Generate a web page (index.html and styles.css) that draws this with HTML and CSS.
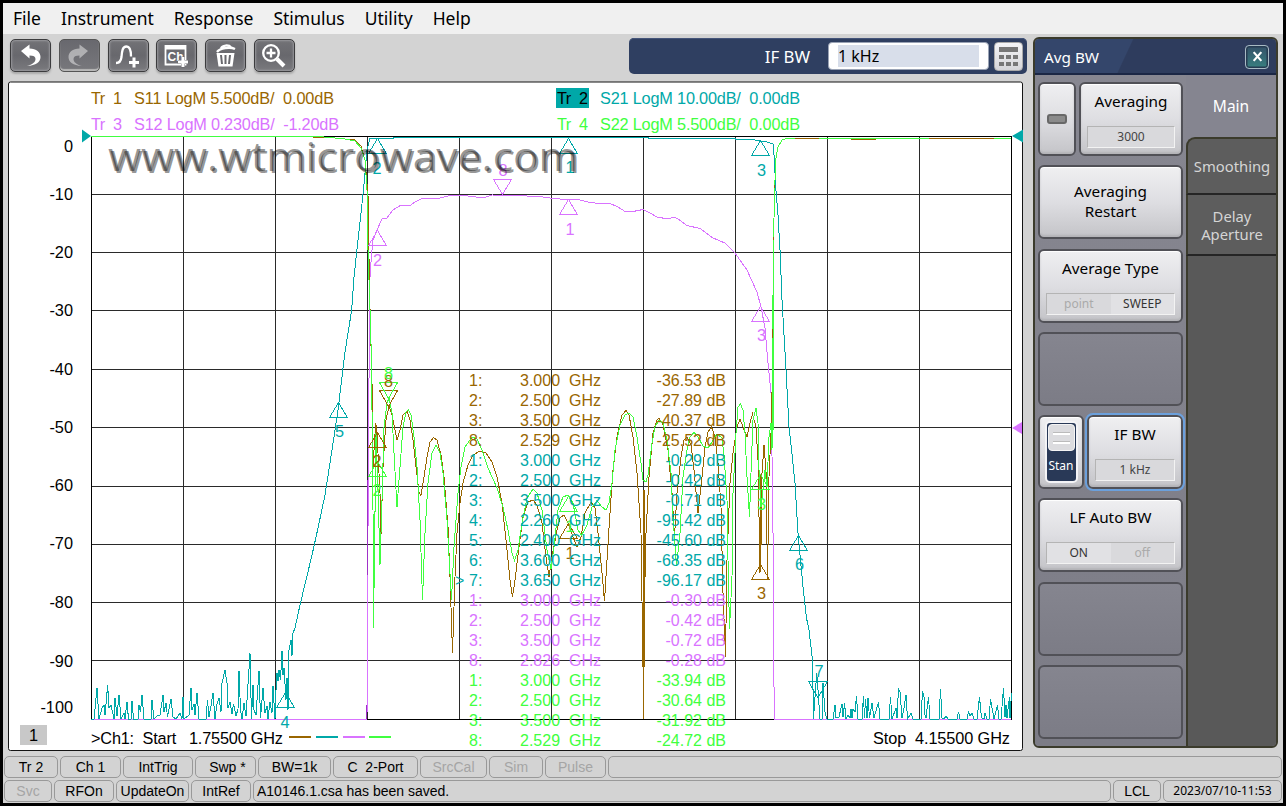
FILE: index.html
```html
<!DOCTYPE html>
<html lang="en">
<head>
<meta charset="utf-8">
<title>Network Analyzer</title>
<link rel="stylesheet" href="styles.css">
</head>
<body>
<div class="app">
  <nav class="menu"><span>File</span><span>Instrument</span><span>Response</span><span>Stimulus</span><span>Utility</span><span>Help</span></nav>
  <div class="main">
    <div class="work">
      <div class="toolbar">
        <div class="tools">
          <button class="tool"><svg viewBox="0 0 41 33"><path class="ic" d="M11 12L19.500 5.500v4c7 .5 11 3.500 11 8.500 0 5-4.500 8.500-13.500 9 5.500-1.500 8.500-4 8.500-7 0-2.500-2-3.500-6-3.500v3z"/></svg></button>
          <button class="tool off"><svg viewBox="0 0 41 33"><path class="ic" d="M30 12L21.500 5.500v4c-7 .5-11 3.500-11 8.500 0 5 4.500 8.500 13.500 9-5.500-1.500-8.500-4-8.500-7 0-2.500 2-3.500 6-3.500v3z"/></svg></button>
          <button class="tool"><svg viewBox="0 0 41 33"><path class="ln" d="M9 24c3.500 0 5-2 5.500-6 .5-6 1-10.500 5-10.500s4.500 4.500 4.500 10"/><path class="ic" d="M25.500 18.500h3v3.500h3.500v3h-3.500v3.500h-3v-3.500H22v-3h3.500z"/></svg></button>
          <button class="tool"><svg viewBox="0 0 41 33"><path class="ln thin" d="M9.500 7h20v18.500h-20z"/><path class="ic" d="M9 6h21v4.500H9z"/><text x="11.500" y="21.500" class="chtext">Ch</text><path class="ic edge" d="M25.500 18h3v3.500H32v3h-3.500V28h-3v-3.500H22v-3h3.500z"/></svg></button>
          <button class="tool"><svg viewBox="0 0 41 33"><path class="ln" d="M12 13c3-4 13-5.500 18-3M16 9.500c1-3.500 8-4 10-1"/><path class="ic" d="M11.500 14h18l-2 13.500h-14z"/><path class="gap" d="M16 16l1 9M20.500 16v9M25 16l-1 9"/></svg></button>
          <button class="tool"><svg viewBox="0 0 41 33"><circle class="ln" cx="18" cy="14" r="7.800"/><path class="ln" d="M18 9.500v9M13.500 14h9"/><path class="ln fat" d="M24 20l7 7"/></svg></button>
        </div>
        <div class="entry"><span>IF BW</span><div class="field"><b>1 kHz</b></div><button class="calc"><svg viewBox="0 0 29 29"><path fill="#777" d="M5 5h19v5H5zM5 13h5v4H5zM12 13h5v4h-5zM19 13h5v4h-5zM5 20h5v4H5zM12 20h5v4h-5zM19 20h5v4h-5z"/></svg></button></div>
      </div>
      <div class="chart">
        <svg class="plot" viewBox="8 81 1016 670">
          <rect x="8.500" y="82" width="1014" height="668.500" fill="#fff" stroke="#141414" rx="2"/>
          <g class="head">
            <text class="c1" x="91" y="104" textLength="31">Tr&#160; 1</text><text class="c1" x="134" y="104" textLength="200">S11 LogM 5.500dB/&#160; 0.00dB</text>
            <text class="c3" x="91" y="130" textLength="31">Tr&#160; 3</text><text class="c3" x="134" y="130" textLength="205">S12 LogM 0.230dB/&#160; -1.20dB</text>
            <rect class="f2" x="556" y="88" width="33" height="20"/>
            <text x="557" y="104" textLength="31">Tr&#160; 2</text><text class="c2" x="600" y="104" textLength="200">S21 LogM 10.00dB/&#160; 0.00dB</text>
            <text class="c4" x="557" y="130" textLength="31">Tr&#160; 4</text><text class="c4" x="600" y="130" textLength="200">S22 LogM 5.500dB/&#160; 0.00dB</text>
          </g>
          <path class="grid" d="M183.500 136v583M275.500 136v583M367.500 136v583M459.500 136v583M551.500 136v583M643.500 136v583M735.500 136v583M827.500 136v583M919.500 136v583M91 194.500h920M91 252.500h920M91 310.500h920M91 369.500h920M91 427.500h920M91 486.500h920M91 544.500h920M91 602.500h920M91 660.500h920"/>
          <path class="frame" d="M91.500 136.500h920v583h-920z"/>
          <g class="axis"><text x="73" y="152">0</text><text x="73" y="200">-10</text><text x="73" y="258">-20</text><text x="73" y="316">-30</text><text x="73" y="375">-40</text><text x="73" y="433">-50</text><text x="73" y="491">-60</text><text x="73" y="549">-70</text><text x="73" y="608">-80</text><text x="73" y="667">-90</text><text x="73" y="713">-100</text></g>
          <g class="trace">
            <polyline class="s3" points="91,719.500 367,719.500 367.500,575 368.500,480 368.500,397 369.500,360 370,277 371.500,255 373,240 377,230 382,219 387,218 393,210 400,205.700 410,205.500 415,202 422,198.700 438,198.500 452,195 468,196 480,197.500 486,197 492,195 513,195.500 540,196.500 555,198.700 568,199.500 580,200 590,202.500 600,203.500 610,203.500 618,207 625,211.500 633,211.500 643,209.500 650,213 658,217.500 667,218.500 675,217.500 678,219 687,225.500 700,228.500 713,238 725,243 735,253 747,270 757,292 761,307 765,328 767.700,360 771,393 772.500,487 773,533 773.500,653 774.500,719.500 1011,719.500"/>
            <path class="s3 dark" d="M367.500 480v95M366.500 705v14"/>
            <polyline class="s2" points="91,719.500 94,719 97,688 99,719 102,708 104,705 105,715 107.700,685 109,708 111,705 114,719 115,698 117,716 119,695 121,719 124,713 125,719 127,702 128.500,719 131,719 132,701 133.500,719 138,719 139,705 140.500,712 142,695 144,719 151,719 152,700 154,719 158,715 160,715 163,695 164,712 166,703 167.500,717 171,699 173,717 176,719 180,713 182,719 183,697 184,719 189,715 191,688 192,710 194,704 195,715 197,693 199,719 206,719 207.500,700 209,717 211,706 213,693 215,719 217,704 219,698 221,712 222,683 225,670 227,683 228,708 230,702 232,714 233.500,704 236,716 238,709 239,671 240.500,710 242,719 244,703 246,716 250,653 251.500,719 253,685 254,710 256,715 259,671 260.500,718 263,688 265,713 267,706 268,719 270,702 272,713 273,686 275,719 276,690 277,673 278,681 279,670 280.500,680 282,651 283,675 284,668 286,700 287,678 288,710 289,650 291,640 292,656 293,633 295,628 300,605 306,580 312,555 318,528 325,495 332,450 338,410 345,352 351.700,310 354,277 358,240 363.500,190 367,150 370,138.500 393,138.500 393,137.500 648,137.500 648,138.500 735,138.500 735,139.500 755,140 760,141 767,142 773,144 774.500,160 775.500,185 778,215 780,250 782,300 785.500,360 789,427 792,454 795,483 798,533 803,587 806.500,618 809,630 812.500,660 813.500,719 816.700,673 818,690 820,719 822,719 823,683 825,712 827,719 833,719 835,705 836,718 839,717 842,704 843,717 844.500,703 846,719 848,715 850,718 851,709 852,718 853,709 855,712 856.500,696 858,719 862,719 863.500,696 864.500,718 865.500,699 867,718 868,698 869.500,718 872,703 874,718 878.500,702 880,719 889,719 890.500,697 892,719 896,708 897,718 898.500,689 900,692 902,718 904,708 906,695 907.500,719 911,713 913,719 921,719 922.500,691 924,697 925,715 926,718 928.500,697 930,719 939,719 940.500,689 942,718 944,719 946,716 948,719 957,719 958.500,712 960,719 967,719 968.500,712 970,716 972,713 974,719 977,719 979.500,697 981,713 982,718 984,719 985,713 987,719 989,719 990.500,699 994,719 997.500,705 999,719 1001,719 1003.500,688 1005,717 1006,705 1007,718 1009.500,697 1010,718 1011.500,693"/>
            <polyline class="s1" points="313,137 335,138 355,140 361,146 365,160 368,195 369.500,290 372,382 373,467 375.700,423 377,433 380,493 381,535 383,467 386,420 389,406 392,415 395,430 397,440 400,430 403,415 407,411.500 410,420 413,440 416,467 419,492 421,495.500 424,477 427,457 430,442 433.500,437.500 437,440 441,455 444,477 448,527 450,577 452.500,653 455,577 457,533 460,503 463,483 468,465 473,455 480,451 486,453 492,462 497,477 502,503 506,540 510,580 512.500,597 515,580 519,547 523,517 528,502 533,500 537,505 542,523 546,557 549,577 552,557 557,530 560,518 564,515 568,523 573,537 577,547 581,537 585,513 591,502 595,508 598,533 602,573 604.500,601 607,560 610,513 613,470 617,437 622,415 626,410.500 629,415 633,437 637,473 641,533 643,667 646,533 649,477 653,433 657,420 659,418 663,425 668,450 672,493 674.500,537 677,493 681,457 684,440 687,437 691,445 694,470 698,513 702,477 705,447 708,432 711.500,427 715,437 718,463 721,507 723,593 725.500,657 727,560 730,483 733,453 737,427 740,419 743,427 747,437 750,423 752.500,414 756,427 758,460 760,573 762,473 764,445 766,470 767.500,580 769,477 771,433 772,393 772.500,333"/>
            <path class="s1" d="M643.500 660v59"/><path class="s1 heavy" d="M643.500 490v177M760.500 475v70"/>
            <polyline class="s4" points="91,136.500 318,136.500 335,138 345,139 355,141 361,148 365,160 367,190 368,250 370,310 371.500,360 372,410 373,510 373.500,627 374.500,553 376,433 378,490 380,565 382,500 384,427 387,403 389,398 392,413 394,453 397,507 400,467 403,427 406,412 408.500,410 411,415 414,437 417,467 420,520 422.500,600 425,533 428,483 432,453 436,445 440,453 443,473 447,520 451.500,600 454,547 458,493 461,467 465,447 472,437 477,439 482,450 488,468 497,488 503,507 508,530 512,553 514.500,560.500 518,550 522,523 527,498 533,489 537,493 542,510 547,550 551,569 554,547 558,510 563,497 568,495 573,503 578,530 581.500,535.500 587,525 592,507 597,500.500 602,507 606,510 609,503 612,483 615,450 620,425 625,415 629,413 633,417 637,437 641,463 643,480 646,482 648,475 652,443 655,427 659,420 663,423 667,440 671,473 673,517 676.500,566 680,533 683,477 687,450 690,437 694,432.500 698,437 703,446 708,448 712,442 717,434 722,438 724,455 727,500 728,560 729.500,629 732,577 733,493 736,433 738,407 740.500,404 743,410 745,433 747,477 749.500,517 751,473 753,420 756,408 758,423 759,470 761,507 763,490 765,470 767,487 769,437 771,423 772,450 772.500,353 773.500,240 774.700,187 776,158 778,147 782,140 787,138.500 1011,138.500"/>
            <path class="s4" d="M373.500 535v93M773.500 240v190"/>
            <path class="s1" d="M794.500 138.500h24M850.500 139.500h25M929 138.500h65M772.500 329v9M773.500 237v3M774.500 185v3"/>
          </g>
          <g class="trace">
            <path class="s2" d="M377.500 138.500l9 15h-18zM568.500 138.500l9 15h-18zM760.500 140.500l9 15h-18zM338.500 402.500l9 15h-18zM798.500 535.500l9 15h-18zM285.500 692.500l9 15h-18zM808.500 681.500h19l-9.500 16z"/>
            <path class="s3" d="M493.500 179.500h18l-9 15zM568.500 199.500l9 15h-18zM377.500 230.500l9 15h-18zM760.500 306.500l9 15h-18z"/>
            <path class="s1" d="M379.500 390.500h18l-9 16zM377.500 432.500l9 15h-18zM568.500 523.500l9 15h-18zM760.500 564.500l9 15h-18z"/>
            <path class="s4" d="M379.500 382.500h18l-9 16zM377.500 461.500l9 15h-18zM568.500 496.500l9 15h-18zM760.500 474.500l9 15h-18z"/>
          </g>
          <path class="f2" d="M82 129.500v13l9-6.500zM1023 129.500v13l-11-6.500z"/><path fill="#d973ff" d="M1022 422v12l-10-6z"/>
          <g class="mk">
            <g class="c2"><text x="377" y="174">2</text><text x="570" y="173">1</text><text x="761.500" y="176">3</text><text x="339.500" y="437">5</text><text x="799.500" y="570">6</text><text x="285" y="728">4</text><text x="819" y="677">7</text></g>
            <g class="c3"><text x="503" y="176">8</text><text x="570" y="235">1</text><text x="377.500" y="266">2</text><text x="761.500" y="341">3</text></g>
            <g class="c1"><text x="388.500" y="387">8</text><text x="377" y="467">2</text><text x="570" y="559">1</text><text x="761.500" y="599">3</text></g>
            <g class="c4"><text x="388.500" y="379">8</text><text x="377" y="496">2</text><text x="570" y="532">1</text><text x="761.500" y="510">3</text></g>
          </g>
          <g class="wm"><text x="108" y="171" textLength="470" lengthAdjust="spacingAndGlyphs">www.wtmicrowave.com</text><text x="110" y="173" textLength="470" lengthAdjust="spacingAndGlyphs">www.wtmicrowave.com</text></g>
          <rect x="20" y="725" width="27" height="20" fill="#c8c8c8"/>
          <g class="foot"><text x="29" y="741">1</text><text x="91" y="744" textLength="192">&gt;Ch1:&#160; Start&#160;&#160; 1.75500 GHz</text><text x="873" y="744" textLength="137">Stop&#160; 4.15500 GHz</text></g>
          <g class="legend"><path class="s1" d="M289 737h22"/><path class="s2" d="M316 737h22"/><path class="s3" d="M343 737h22"/><path class="s4" d="M369 737h22"/></g>
        </svg>
        <div class="readout">
          <div class="cur">&gt;</div>
          <div><p class="c1">1:
2:
3:
8:</p><p class="c2">1:
2:
3:
4:
5:
6:
7:</p><p class="c3">1:
2:
3:
8:</p><p class="c4">1:
2:
3:
8:</p></div>
          <div><p class="c1">3.000
2.500
3.500
2.529</p><p class="c2">3.000
2.500
3.500
2.260
2.400
3.600
3.650</p><p class="c3">3.000
2.500
3.500
2.826</p><p class="c4">3.000
2.500
3.500
2.529</p></div>
          <div><p class="c1">GHz
GHz
GHz
GHz</p><p class="c2">GHz
GHz
GHz
GHz
GHz
GHz
GHz</p><p class="c3">GHz
GHz
GHz
GHz</p><p class="c4">GHz
GHz
GHz
GHz</p></div>
          <div class="val"><p class="c1">-36.53 dB
-27.89 dB
-40.37 dB
-25.52 dB</p><p class="c2">-0.29 dB
-0.42 dB
-0.71 dB
-95.42 dB
-45.60 dB
-68.35 dB
-96.17 dB</p><p class="c3">-0.30 dB
-0.42 dB
-0.72 dB
-0.28 dB</p><p class="c4">-33.94 dB
-30.64 dB
-31.92 dB
-24.72 dB</p></div>
        </div>
      </div>
    </div>
    <aside class="panel">
      <header><span>Avg BW</span><button class="close"><svg viewBox="0 0 10 10"><path d="M1.500 1l7 8M8.500 1l-7 8"/></svg></button></header>
      <div class="pbody">
        <div class="keys">
          <div class="row"><div class="key led"><i></i></div><div class="key"><span>Averaging</span><div class="sub">3000</div></div></div>
          <div class="key two"><span>Averaging<br>Restart</span></div>
          <div class="key"><span>Average Type</span><div class="sub pair"><em>point</em><b>SWEEP</b></div></div>
          <div class="key blank"></div>
          <div class="row"><div class="key sw"><div class="slot"><div class="knob"><i></i><i></i></div>Stan</div></div><div class="key sel"><span>IF BW</span><div class="sub">1 kHz</div></div></div>
          <div class="key"><span>LF Auto BW</span><div class="sub pair"><b>ON</b><em>off</em></div></div>
          <div class="key blank"></div>
          <div class="key blank"></div>
        </div>
        <div class="tabs"><div class="tab main-tab">Main</div><div class="tab first">Smoothing</div><div class="tab">Delay<br>Aperture</div><div class="rest"></div></div>
      </div>
    </aside>
  </div>
  <div class="status s-top"><span>Tr 2</span><span>Ch 1</span><span>IntTrig</span><span>&nbsp;Swp *</span><span>BW=1k</span><span>C&nbsp; 2-Port</span><span class="dim">SrcCal</span><span class="dim">Sim</span><span class="dim">Pulse</span><span></span></div>
  <div class="status s-bot"><span class="dim">Svc</span><span>RFOn</span><span>UpdateOn</span><span>IntRef</span><span class="msg">A10146.1.csa has been saved.</span><span>LCL</span><span class="date">2023/07/10-11:53</span></div>
</div>
</body>
</html>
```
FILE: styles.css
```css
* { box-sizing: border-box; }
body { margin: 0; background: #000; font-family: "Noto Sans", sans-serif; }
button { padding: 0; margin: 0; font: inherit; }
.app { width: 1280px; height: 800px; margin: 3px; background: #d3d3d3; overflow: hidden; display: flex; flex-direction: column; }
.menu { height: 31px; background: #f0f0f0; display: flex; gap: 20px; padding-left: 10px; font-size: 17.5px; line-height: 31px; color: #000; }
.main { height: 717px; display: flex; }
.work { width: 1024px; padding-left: 5px; display: flex; flex-direction: column; }
.toolbar { height: 47px; padding: 4px 0 0 2px; display: flex; justify-content: space-between; }
.tools { display: flex; gap: 7.8px; padding-top: 1px; }
.tool { width: 41px; height: 33px; border: 1.5px solid #3c3c3e; border-radius: 5px; background: linear-gradient(#727276, #68686d 50%, #7a7a7e); box-shadow: inset 0 0 2px 1px #98989c, 0 2px 2px #aaa; display: flex; }
.tool svg { width: 41px; height: 33px; margin: -1.5px; flex: none; }
.tool.off { background: linear-gradient(#68686e, #78787c); box-shadow: inset 0 -2px 1px #b8b8b8; border-color: #555; }
.off svg { opacity: .45; }
.ic { fill: #fff; }
.ln { fill: none; stroke: #fff; stroke-width: 2.3; }
.ln.thin { stroke-width: 1.8; }
.ln.fat { stroke-width: 4; }
.edge { stroke: #66666a; stroke-width: .8; paint-order: stroke; }
.gap { stroke: #68686d; stroke-width: 2; fill: none; }
.chtext { font: bold 12px "Liberation Sans", sans-serif; fill: #fff; }
.entry { width: 398px; height: 36px; border-radius: 5px; background: #2f3f61; box-shadow: inset 0 1px #45557a; display: flex; align-items: center; padding-right: 4px; color: #fff; font-size: 16px; }
.entry span { flex: 1; text-align: right; padding-right: 18px; font-size: 16.8px; }
.field { width: 161px; height: 28px; border-radius: 4px; background: #fff; border: 1px solid #9aa3b5; padding: 2px 9px; }
.field b { display: block; height: 22px; background: #d8deea; color: #000; font-weight: 400; line-height: 22px; }
.calc { width: 29px; height: 29px; margin-left: 5px; border: 1px solid #aaa; border-radius: 4px; background: linear-gradient(#f5f5f7, #d5d5d9); display: flex; }
.calc svg { width: 29px; margin: -1px; flex: none; }
.chart { position: relative; width: 1016px; height: 670px; }
.plot { display: block; width: 1016px; height: 670px; font: 16.3px "Liberation Sans", sans-serif; }
.grid { stroke: #2a2a2a; shape-rendering: crispEdges; }
.frame { fill: none; stroke: #000; shape-rendering: crispEdges; }
.axis { text-anchor: end; }
.mk { text-anchor: middle; }
.trace { fill: none; stroke-width: 1; shape-rendering: crispEdges; }
.heavy { stroke-width: 2; }
.legend { stroke-width: 2; shape-rendering: crispEdges; }
.s1 { stroke: #996600; }
.s2 { stroke: #00a8a8; }
.s3 { stroke: #d973ff; }
.s4 { stroke: #40ff40; }
.s3.dark { stroke: #a030c8; }
.c1 { fill: #996600; color: #996600; }
.c2 { fill: #00a8a8; color: #00a8a8; }
.c3 { fill: #d973ff; color: #d973ff; }
.c4 { fill: #40ff40; color: #40ff40; }
.f2 { fill: #00a8a8; }
.wm { font: 41px "Open Sans", sans-serif; fill: #000; fill-opacity: .42; }
.readout { position: absolute; left: 447px; top: 290px; width: 271px; display: grid; grid-template-columns: 14px 51px 49px 47px 110px; font: 16px/20px "Liberation Sans", sans-serif; white-space: pre; }
.readout p { margin: 0; }
.val { text-align: right; }
.cur { padding-top: 200px; color: #00a8a8; }
.panel { width: 245px; height: 711px; margin: 3px 0 0 6px; border: 2px solid #3b3b2c; border-radius: 6px; background: #81818b; overflow: hidden; }
.panel header { height: 36px; background: linear-gradient(115deg, #34466b 38%, #2e3c5d 38.500%); border-bottom: 2px solid #1b2745; color: #fff; font-size: 15.3px; display: flex; align-items: center; justify-content: space-between; padding: 1px 7px 0 9px; }
.close { width: 24px; height: 24px; border: 1.5px solid #a8bac4; border-radius: 4px; background: linear-gradient(#345068, #388080); box-shadow: inset 0 0 0 1.5px #263c52; display: flex; align-items: center; justify-content: center; }
.close svg { width: 11px; fill: none; stroke: #fff; stroke-width: 2; }
.pbody { display: flex; height: 671px; }
.keys { width: 151px; padding: 7px 3px 0 3px; display: flex; flex-direction: column; gap: 9.3px; background: linear-gradient(#878791, #7c7c86); }
.row { display: flex; gap: 3px; height: 74px; flex: none; }
.key { width: 145px; height: 74px; flex: none; border: 2px solid #515157; border-radius: 6px; background: linear-gradient(#efeff1, #dedee2 50%, #c4c4c8); box-shadow: inset 0 1px 1px #fff, inset 0 -2px 2px #b4b4b8; display: flex; flex-direction: column; align-items: center; font-size: 15.3px; color: #000; line-height: 20px; padding-top: 7px; }
.row .key { flex: 1; width: auto; }
.key.two { padding-top: 14px; text-align: center; }
.key.blank { background: linear-gradient(#85858f, #7c7c86); box-shadow: none; }
.row .led { flex: none; width: 38px; justify-content: center; padding: 0; }
.led i { width: 20px; height: 10px; border: 2px solid #686868; border-radius: 3px; background: #8b8b8b; }
.sub { width: calc(100% - 12px); height: 22px; margin-top: auto; margin-bottom: 6px; border: 1px solid #b4b4b4; border-right-color: #f3f3f3; border-bottom-color: #f3f3f3; background: #d9d9dc; font-size: 12px; line-height: 20px; text-align: center; color: #444; }
.pair { display: flex; }
.pair > * { flex: 1; font-style: normal; font-weight: 400; }
.pair b { background: #e1e1e4; color: #333; }
.pair em { color: #aaa; }
.row .sw { flex: none; width: 46px; padding: 4px 0 0; }
.slot { width: 33px; height: 62px; border: 2px solid #f4f4f6; border-radius: 5px; background: #293957; color: #fff; font-size: 12px; text-align: center; line-height: 20px; padding: 1px; }
.knob { height: 27px; margin-bottom: 5px; border-radius: 4px; background: #dcdcdf; border: 1px solid #f4f4f4; display: flex; flex-direction: column; align-items: center; justify-content: center; gap: 6px; }
.knob i { width: 17px; height: 3px; border-top: 1px solid #bbb; background: #fff; }
.row .sel { outline: 2.5px solid #6ba0dc; outline-offset: -.5px; }
.tabs { flex: 1; display: flex; flex-direction: column; overflow: hidden; color: #fff; font-size: 14.8px; line-height: 18px; text-align: center; background: #595959; }
.tab { height: 61px; border-left: 2px solid #3b3b2c; border-bottom: 2px solid #252525; background: #5d5d5d; color: #d5d5d5; display: flex; align-items: center; justify-content: center; }
.tab.first { height: 58px; border-top: 2px solid #3b3b2c; border-top-left-radius: 9px; box-shadow: -5px -5px 0 5px #858590; }
.tab.main-tab { height: 62px; background: #858590; border: 0; color: #fff; font-size: 15.5px; }
.rest { flex: 1; border-left: 2px solid #3b3b2c; }
.status { height: 22px; margin: 2px 1px 0; display: grid; gap: 2px; font: 14px/21px "Liberation Sans", sans-serif; color: #000; }
.s-top { margin-top: 5px; grid-template-columns: 54px 61px 70px 61px 73px 85px 67px 54px 61px 1fr; }
.s-bot { grid-template-columns: 48px 60px 73px 60px 858px 48px 1fr; }
.status span { border: 1px solid #999; border-radius: 5px; text-align: center; white-space: nowrap; overflow: hidden; }
.status .dim { color: #a5a5a5; }
.status .msg { text-align: left; padding-left: 3px; }
.status .date { font: 12px/19px "Noto Sans", sans-serif; }
```
